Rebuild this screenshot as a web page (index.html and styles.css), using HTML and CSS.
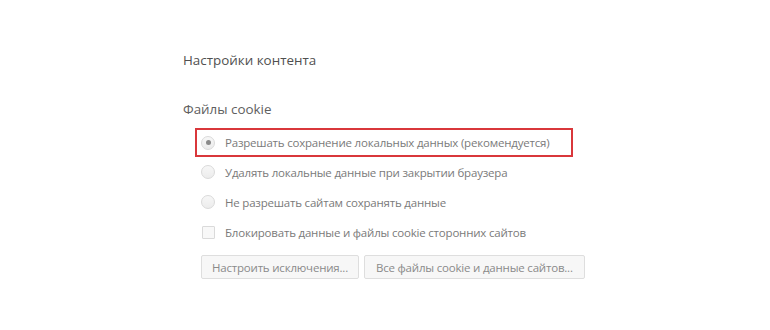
FILE: index.html
```html
<!doctype html>
<html>
<head>
	<title>Настройки контента</title>
	<link rel="stylesheet" href="styles.css">
</head>
<body>
<div class="page">
	<h1>Настройки контента</h1>
	<div class="section">
		<h2>Файлы cookie</h2>
		<div class="options">
			<label class="option highlight"><span class="radio checked"></span>Разрешать сохранение локальных данных (рекомендуется)</label>
			<label class="option"><span class="radio"></span>Удалять локальные данные при закрытии браузера</label>
			<label class="option"><span class="radio"></span>Не разрешать сайтам сохранять данные</label>
			<label class="option"><span class="check"></span>Блокировать данные и файлы cookie сторонних сайтов</label>
			<div class="buttons">
				<button>Настроить исключения...</button>
				<button class="wide">Все файлы cookie и данные сайтов...</button>
			</div>
		</div>
	</div>
</div>
</body>
</html>
```

FILE: styles.css
```css
* {
    margin: 0;
    padding: 0;
    box-sizing: border-box;
}

body, button {
    font: 11.5px "Open Sans", Arial, sans-serif;
    letter-spacing: -0.2px;
    color: #7a7a7a;
}

body {
    background: #fff;
}

.page {
    padding: 50px 0 0 183px;
}

h1 {
    font-size: 13.4px;
    font-weight: normal;
    color: #505050;
    line-height: 20px;
    letter-spacing: 0;
}

.section {
    margin-top: 29px;
}

h2 {
    font-size: 13.4px;
    font-weight: normal;
    color: #606060;
    line-height: 20px;
    letter-spacing: 0;
}

.options {
    margin-top: 9px;
    padding-left: 12px;
}

.option {
    display: flex;
    align-items: center;
    height: 30px;
    width: 378px;
    padding-left: 6px;
    white-space: nowrap;
}

.option.highlight {
    height: 29px;
    border: 2px solid #d9373b;
    padding-left: 4px;
}

.radio, .check {
    flex: 0 0 14px;
    width: 14px;
    height: 14px;
    margin-right: 10px;
    border: 1px solid #dadada;
    background: linear-gradient(#f7f7f7, #ececec);
}

.radio {
    border-radius: 50%;
    position: relative;
}

.radio.checked::after {
    content: "";
    position: absolute;
    left: 3.5px;
    top: 3.5px;
    width: 5px;
    height: 5px;
    border-radius: 50%;
    background: #8a8a8a;
}

.check {
    flex-basis: 13px;
    width: 13px;
    height: 13px;
    margin-left: 1px;
    border-radius: 1px;
    background: #f8f8f8;
}

.buttons {
    display: flex;
    gap: 5px;
    margin-top: 8px;
    padding-left: 6px;
}

.buttons button {
    height: 24px;
    padding: 0 10px;
    border: 1px solid #dedede;
    border-radius: 2px;
    background: #f7f7f7;
    color: #8a8a8a;
}

.buttons button.wide {
    padding: 0 11px;
}
```
